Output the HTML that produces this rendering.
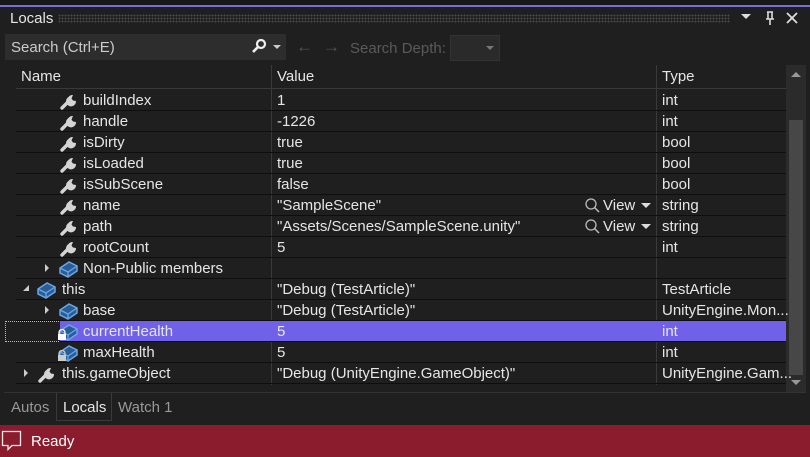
<!DOCTYPE html>
<html><head><meta charset="utf-8"><style>
*{margin:0;padding:0;box-sizing:border-box}
body{width:810px;height:457px;background:#1f1f1f;font-family:"Liberation Sans",sans-serif;font-size:15px;color:#e6e6e6;position:relative;overflow:hidden}
.a{position:absolute}
.row{position:absolute;left:16px;width:770px;height:21px;border-bottom:1px solid #0e0e0e}
.row span{position:absolute;top:2px;white-space:nowrap}
.v{left:261px}.t{left:646px}
.ic{position:absolute;top:1px}
.dots{background-image:radial-gradient(#4a4a4a 0.8px,transparent 0.9px);background-size:3px 3px}
</style></head><body>
<div class="a" style="left:0;top:0;width:810px;height:5px;background:#181818"></div>
<div class="a" style="left:0;top:5px;width:810px;height:2px;background:#7a6fd8"></div>
<div class="a" style="left:10px;top:10px;font-size:15px">Locals</div>
<div class="a dots" style="left:58px;top:14px;width:672px;height:9px"></div>
<div class="a" style="left:741px;top:14px;width:0;height:0;border-left:5px solid transparent;border-right:5px solid transparent;border-top:5px solid #ddd"></div>
<svg class="a" style="left:764px;top:11px" width="12" height="14"><path d="M3 1h6M4 1v7M8 1v7M2 8h8M6 8v6" stroke="#ddd" stroke-width="1.6" fill="none"/></svg>
<svg class="a" style="left:786px;top:12px" width="12" height="12"><path d="M1 1L11 11M11 1L1 11" stroke="#ddd" stroke-width="1.8"/></svg>
<div class="a" style="left:5px;top:34px;width:281px;height:26px;background:#2d2d2d"></div>
<div class="a" style="left:11px;top:39px;color:#ccc">Search (Ctrl+E)</div>
<svg class="a" style="left:251px;top:38px" width="16" height="16"><circle cx="10" cy="6" r="4" stroke="#eee" stroke-width="2.2" fill="none"/><path d="M7 9L2 14" stroke="#eee" stroke-width="2.6"/></svg>
<div class="a" style="left:273px;top:45px;border-left:4px solid transparent;border-right:4px solid transparent;border-top:4px solid #ccc"></div>
<div class="a" style="left:296px;top:37px;color:#555;font-size:17px">&larr;</div>
<div class="a" style="left:323px;top:37px;color:#555;font-size:17px">&rarr;</div>
<div class="a" style="left:350px;top:40px;color:#5a5a5a">Search Depth:</div>
<div class="a" style="left:450px;top:35px;width:50px;height:26px;background:#2a2a2a;border:1px solid #333"></div>
<div class="a" style="left:486px;top:46px;border-left:4px solid transparent;border-right:4px solid transparent;border-top:4px solid #777"></div>
<div class="a" style="left:16px;top:65px;width:770px;height:24px;background:#1f1f1f;border-bottom:1px solid #3a3a3a"></div>
<div class="a" style="left:21px;top:68px">Name</div>
<div class="a" style="left:277px;top:68px">Value</div>
<div class="a" style="left:662px;top:68px">Type</div>
<div class="a" style="left:271px;top:65px;width:1px;height:320px;background:#3a3a3a"></div>
<div class="a" style="left:656px;top:65px;width:1px;height:320px;background:#3a3a3a"></div>
<div class="a" style="left:786px;top:65px;width:20px;height:328px;background:#2b2b2b"></div>
<div class="a" style="left:789px;top:120px;width:14px;height:255px;background:#474747"></div>
<div class="a" style="left:791px;top:72px;border-left:5px solid transparent;border-right:5px solid transparent;border-bottom:5px solid #999"></div>
<div class="a" style="left:791px;top:380px;border-left:5px solid transparent;border-right:5px solid transparent;border-top:5px solid #999"></div>
<svg width="0" height="0" style="position:absolute"><defs>
<g id="w"><path d="M3 17L11 9" stroke="#d4d4d4" stroke-width="3.4" stroke-linecap="round"/><path d="M9.5 6A5 5 0 1 0 17 10L14 9.5 12.5 7.5 14 4A5 5 0 0 0 9.5 6Z" fill="#d4d4d4"/></g>
<g id="c"><path d="M2 9L11 3 19 7 19 12 10 18 2 14Z" fill="#2a5d95" stroke="#6aa6e6" stroke-width="1.5"/><path d="M2 9L10 13 19 7M10 13V18" stroke="#6aa6e6" stroke-width="1.3" fill="none"/></g>
</defs></svg>
<div class="row" style="top:90px"><svg class="ic" style="left:43px" width="20" height="20"><use href="#w"/></svg><span style="left:67px">buildIndex</span><span class="v">1</span><span class="t">int</span></div>
<div class="row" style="top:111px"><svg class="ic" style="left:43px" width="20" height="20"><use href="#w"/></svg><span style="left:67px">handle</span><span class="v">-1226</span><span class="t">int</span></div>
<div class="row" style="top:132px"><svg class="ic" style="left:43px" width="20" height="20"><use href="#w"/></svg><span style="left:67px">isDirty</span><span class="v">true</span><span class="t">bool</span></div>
<div class="row" style="top:153px"><svg class="ic" style="left:43px" width="20" height="20"><use href="#w"/></svg><span style="left:67px">isLoaded</span><span class="v">true</span><span class="t">bool</span></div>
<div class="row" style="top:174px"><svg class="ic" style="left:43px" width="20" height="20"><use href="#w"/></svg><span style="left:67px">isSubScene</span><span class="v">false</span><span class="t">bool</span></div>
<div class="row" style="top:195px"><svg class="ic" style="left:43px" width="20" height="20"><use href="#w"/></svg><span style="left:67px">name</span><span class="v">"SampleScene"</span><svg class="ic" style="left:568px;top:2px" width="17" height="17"><circle cx="7" cy="7" r="5" stroke="#bbb" stroke-width="1.3" fill="none"/><path d="M10.5 10.5L15 15" stroke="#bbb" stroke-width="1.5"/></svg><span style="left:587px">View</span><div class="a" style="left:625px;top:8px;border-left:5px solid transparent;border-right:5px solid transparent;border-top:5px solid #ddd"></div><span class="t">string</span></div>
<div class="row" style="top:216px"><svg class="ic" style="left:43px" width="20" height="20"><use href="#w"/></svg><span style="left:67px">path</span><span class="v">"Assets/Scenes/SampleScene.unity"</span><svg class="ic" style="left:568px;top:2px" width="17" height="17"><circle cx="7" cy="7" r="5" stroke="#bbb" stroke-width="1.3" fill="none"/><path d="M10.5 10.5L15 15" stroke="#bbb" stroke-width="1.5"/></svg><span style="left:587px">View</span><div class="a" style="left:625px;top:8px;border-left:5px solid transparent;border-right:5px solid transparent;border-top:5px solid #ddd"></div><span class="t">string</span></div>
<div class="row" style="top:237px"><svg class="ic" style="left:43px" width="20" height="20"><use href="#w"/></svg><span style="left:67px">rootCount</span><span class="v">5</span><span class="t">int</span></div>
<div class="row" style="top:258px"><div class="a" style="left:29px;top:6px;border-top:4px solid transparent;border-bottom:4px solid transparent;border-left:4px solid #ccc"></div><svg class="ic" style="left:42px" width="21" height="20"><use href="#c"/></svg><span style="left:67px">Non-Public members</span></div>
<div class="row" style="top:279px"><div class="a" style="left:7px;top:6px;border-left:6px solid transparent;border-bottom:6px solid #ccc"></div><svg class="ic" style="left:20px" width="21" height="20"><use href="#c"/></svg><span style="left:46px">this</span><span class="v">"Debug (TestArticle)"</span><span class="t">TestArticle</span></div>
<div class="row" style="top:300px"><div class="a" style="left:29px;top:6px;border-top:4px solid transparent;border-bottom:4px solid transparent;border-left:4px solid #ccc"></div><svg class="ic" style="left:42px" width="21" height="20"><use href="#c"/></svg><span style="left:67px">base</span><span class="v">"Debug (TestArticle)"</span><span class="t">UnityEngine.Mon...</span></div>
<div class="a" style="left:5px;top:321px;width:56px;height:21px;border:1px dotted #bbb"></div>
<div class="row" style="top:321px;left:60px;width:726px;background:#7160e8"><svg class="ic" style="left:-2px" width="21" height="20"><use href="#c"/></svg><svg class="ic" style="left:-3px;top:8px" width="10" height="12"><path d="M2 5V3.5a3 3 0 0 1 6 0V5" stroke="#fff" fill="none" stroke-width="1.3"/><rect x="1" y="5" width="8" height="6" fill="#fff"/></svg><span style="left:23px">currentHealth</span><span style="left:217px">5</span><span style="left:602px">int</span></div>
<div class="row" style="top:342px"><svg class="ic" style="left:42px" width="21" height="20"><use href="#c"/></svg><svg class="ic" style="left:41px;top:8px" width="10" height="12"><path d="M2 5V3.5a3 3 0 0 1 6 0V5" stroke="#ccc" fill="none" stroke-width="1.3"/><rect x="1" y="5" width="8" height="6" fill="#ccc"/></svg><span style="left:67px">maxHealth</span><span class="v">5</span><span class="t">int</span></div>
<div class="row" style="top:363px"><div class="a" style="left:8px;top:6px;border-top:4px solid transparent;border-bottom:4px solid transparent;border-left:4px solid #ccc"></div><svg class="ic" style="left:21px" width="20" height="20"><use href="#w"/></svg><span style="left:46px">this.gameObject</span><span class="v">"Debug (UnityEngine.GameObject)"</span><span class="t">UnityEngine.Gam...</span></div>
<div class="a" style="left:4px;top:392px;width:802px;height:1px;background:#333"></div>
<div class="a" style="left:11px;top:399px;color:#999">Autos</div>
<div class="a" style="left:56px;top:393px;width:56px;height:28px;border:1px solid #3a3a3a;border-top:none;background:#1f1f1f"></div>
<div class="a" style="left:63px;top:399px;color:#e6e6e6">Locals</div>
<div class="a" style="left:118px;top:399px;color:#999">Watch 1</div>
<div class="a" style="left:0;top:425px;width:810px;height:32px;background:#8a1c2e"></div>
<svg class="a" style="left:1px;top:430px" width="22" height="22"><path d="M1.5 1.5H19.5V15.5H11L7 19.5 7 15.5H1.5Z" stroke="#eee" stroke-width="1.3" fill="none"/></svg>
<div class="a" style="left:31px;top:433px;color:#fff">Ready</div>
</body></html>
